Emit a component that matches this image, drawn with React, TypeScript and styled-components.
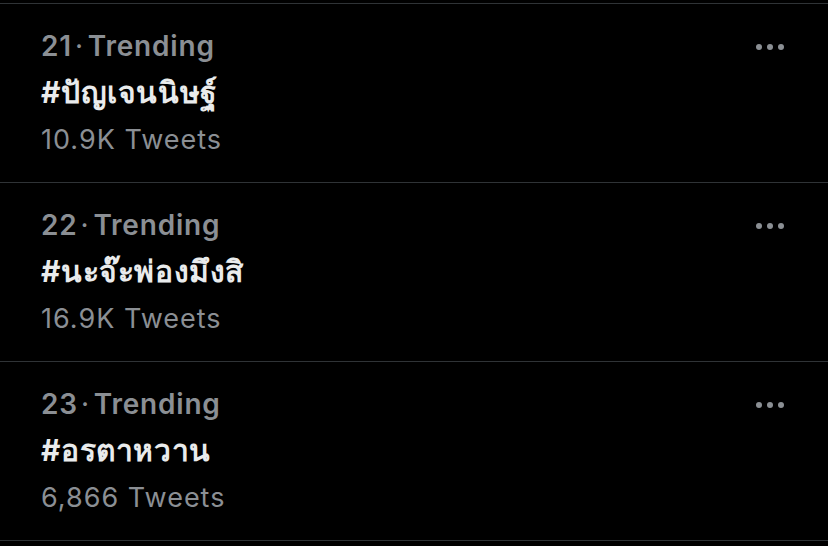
import React from 'react';
import styled, { createGlobalStyle } from 'styled-components';

const GlobalStyle = createGlobalStyle`
  html, body {
    margin: 0;
    padding: 0;
    background: #000;
  }
  body {
    font-family: Inter, "Liberation Sans", "Noto Sans", sans-serif;
    -webkit-font-smoothing: antialiased;
  }
`;

const List = styled.div`
  width: 828px;
  height: 546px;
  padding-top: 3px;
  box-sizing: border-box;
  background: #000;
  overflow: hidden;
`;

const Row = styled.div`
  display: flex;
  justify-content: space-between;
  box-sizing: border-box;
  border-top: 1px solid #2f3336;
  height: 179px;
  padding: 19px 42px 0 41px;

  &:last-child {
    height: 180px;
    border-bottom: 1px solid #2f3336;
  }
`;

const Body = styled.div`
  display: flex;
  flex-direction: column;
`;

const Meta = styled.div`
  color: #8b8f94;
  font-size: 28px;
  font-weight: 600;
  line-height: 46px;
  letter-spacing: 0.8px;
`;

const Dot = styled.span`
  margin: 0 4px 0 3px;
  font-weight: 400;
`;

const Topic = styled.div`
  color: #e9ebec;
  font-size: 30px;
  font-weight: 700;
  line-height: 46px;
  letter-spacing: 0.6px;
`;

const Count = styled.div`
  color: #8b8f94;
  font-size: 27px;
  font-weight: 400;
  line-height: 50px;
  letter-spacing: 1px;
`;

const More = styled.svg`
  margin-top: 14px;
  flex-shrink: 0;
`;

const trends = [
  { rank: 21, topic: '#ปัญเจนนิษฐ์', count: '10.9K Tweets' },
  { rank: 22, topic: '#นะจ๊ะพ่องมึงสิ', count: '16.9K Tweets' },
  { rank: 23, topic: '#อรตาหวาน', count: '6,866 Tweets' },
];

export default function App() {
  return (
    <>
      <GlobalStyle />
      <List>
        {trends.map((t) => (
          <Row key={t.rank}>
            <Body>
              <Meta>
                {t.rank}
                <Dot>·</Dot>
                Trending
              </Meta>
              <Topic>{t.topic}</Topic>
              <Count>{t.count}</Count>
            </Body>
            <More width="32" height="20" viewBox="0 0 32 20">
              <circle cx="5" cy="10" r="3" fill="#8b8f94" />
              <circle cx="16" cy="10" r="3" fill="#8b8f94" />
              <circle cx="27" cy="10" r="3" fill="#8b8f94" />
            </More>
          </Row>
        ))}
      </List>
    </>
  );
}
